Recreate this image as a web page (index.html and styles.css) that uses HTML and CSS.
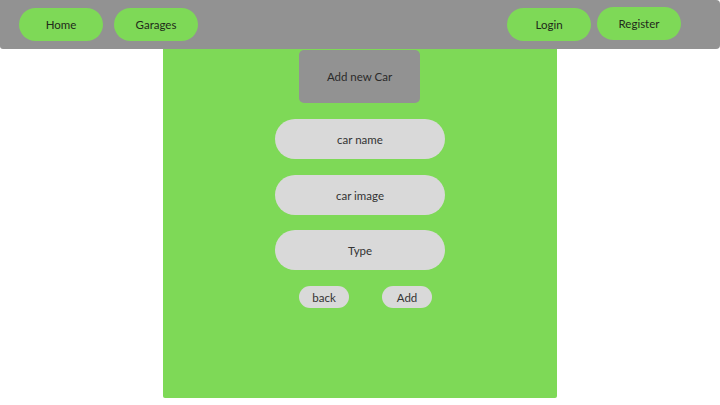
FILE: index.html
```html
<!DOCTYPE html>
<html>
<head>
<meta charset="utf-8">
<link rel="stylesheet" href="styles.css">
</head>
<body>
<header class="topbar">
  <nav class="nav-left">
    <a class="pill">Home</a>
    <a class="pill">Garages</a>
  </nav>
  <nav class="nav-right">
    <a class="pill">Login</a>
    <a class="pill pill-up">Register</a>
  </nav>
</header>
<main class="panel">
  <div class="title">Add new Car</div>
  <div class="field field-first">car name</div>
  <div class="field">car image</div>
  <div class="field field-last">Type</div>
  <div class="actions">
    <button class="small">back</button>
    <button class="small">Add</button>
  </div>
</main>
</body>
</html>
```
FILE: styles.css
```css
* { box-sizing: border-box; }
html, body { margin: 0; padding: 0; }
body {
  width: 720px;
  height: 405px;
  background: #ffffff;
  font-family: Lato, "Open Sans", sans-serif;
  font-size: 11.5px;
  color: #2f2f2f;
  overflow: hidden;
}
.topbar {
  height: 49px;
  background: #929292;
  border-radius: 0 4px 4px 3px;
  display: flex;
  justify-content: space-between;
  align-items: flex-start;
  padding: 8px 39px 0 19px;
}
.nav-left, .nav-right { display: flex; align-items: flex-start; }
.nav-left { gap: 11px; }
.nav-right { gap: 6px; }
.pill {
  width: 84px;
  height: 33px;
  border-radius: 17px;
  background: #7ed957;
  display: flex;
  align-items: center;
  justify-content: center;
  color: #1f2a1a;
  font-size: 11.5px;
}
.pill-up { margin-top: -1px; }
.panel {
  width: 394px;
  height: 349px;
  margin: 0 auto;
  background: #7ed957;
  border-radius: 0 0 2px 2px;
  display: flex;
  flex-direction: column;
  align-items: center;
  padding-top: 1px;
}
.title {
  width: 121px;
  height: 53px;
  background: #929292;
  border-radius: 5px;
  display: flex;
  align-items: center;
  justify-content: center;
  color: #2a2a2a;
  margin: 0 0 16px -1px;
}
.field {
  width: 170px;
  height: 40px;
  border-radius: 20px;
  background: #d9d9d9;
  display: flex;
  align-items: center;
  justify-content: center;
  color: #333;
  margin-bottom: 15px;
}
.field-first { margin-bottom: 16px; }
.field-last { margin-bottom: 16px; }
.actions {
  display: flex;
  gap: 33px;
  padding-left: 11px;
}
.small {
  width: 50px;
  height: 22px;
  border: none;
  border-radius: 11px;
  background: #d9d9d9;
  font-family: Lato, "Open Sans", sans-serif;
  font-size: 11.5px;
  color: #333;
  padding: 0;
}
```
